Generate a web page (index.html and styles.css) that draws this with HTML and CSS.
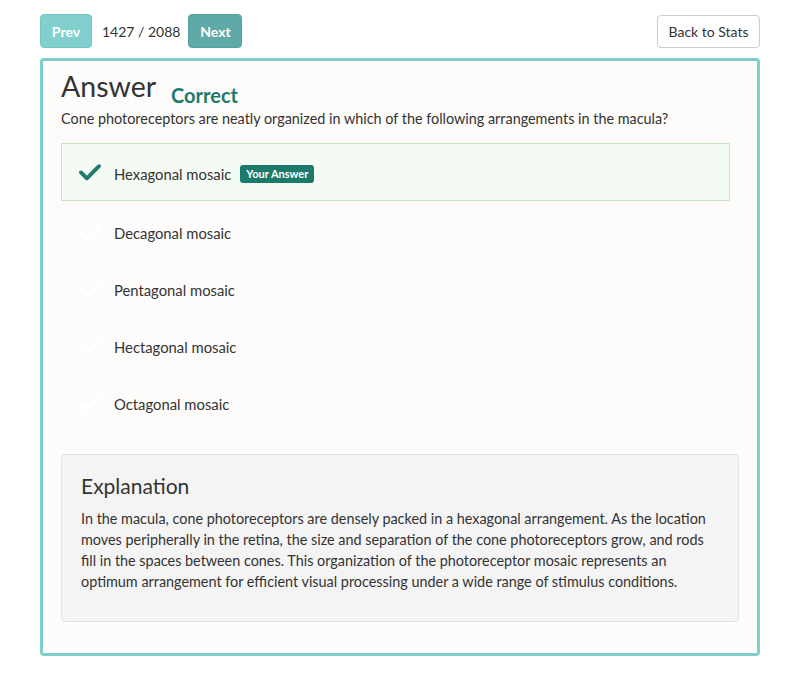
FILE: index.html
```html
<!DOCTYPE html>
<html>
<head>
<meta charset="utf-8">
<link rel="stylesheet" href="styles.css">
</head>
<body>
<div class="page">
  <div class="topbar">
    <div class="nav">
      <button class="btn btn-prev">Prev</button>
      <span class="counter">1427 / 2088</span>
      <button class="btn btn-next">Next</button>
    </div>
    <button class="btn-back">Back to Stats</button>
  </div>
  <div class="panel">
    <div class="title-row">
      <h1 class="title">Answer</h1>
      <span class="status">Correct</span>
    </div>
    <p class="question">Cone photoreceptors are neatly organized in which of the following arrangements in the macula?</p>
    <div class="options">
      <div class="option selected">
        <svg class="check" viewBox="0 0 24 20"><path d="M2 10.5 L8.5 17 L22 3.5" fill="none" stroke="currentColor" stroke-width="4.2" stroke-linecap="round" stroke-linejoin="round"/></svg>
        <span class="opt-text">Hexagonal mosaic</span>
        <span class="badge">Your Answer</span>
      </div>
      <div class="option">
        <svg class="check faint" viewBox="0 0 24 20"><path d="M2 10.5 L8.5 17 L22 3.5" fill="none" stroke="currentColor" stroke-width="4.2" stroke-linecap="round" stroke-linejoin="round"/></svg>
        <span class="opt-text">Decagonal mosaic</span>
      </div>
      <div class="option">
        <svg class="check faint" viewBox="0 0 24 20"><path d="M2 10.5 L8.5 17 L22 3.5" fill="none" stroke="currentColor" stroke-width="4.2" stroke-linecap="round" stroke-linejoin="round"/></svg>
        <span class="opt-text">Pentagonal mosaic</span>
      </div>
      <div class="option">
        <svg class="check faint" viewBox="0 0 24 20"><path d="M2 10.5 L8.5 17 L22 3.5" fill="none" stroke="currentColor" stroke-width="4.2" stroke-linecap="round" stroke-linejoin="round"/></svg>
        <span class="opt-text">Hectagonal mosaic</span>
      </div>
      <div class="option">
        <svg class="check faint" viewBox="0 0 24 20"><path d="M2 10.5 L8.5 17 L22 3.5" fill="none" stroke="currentColor" stroke-width="4.2" stroke-linecap="round" stroke-linejoin="round"/></svg>
        <span class="opt-text">Octagonal mosaic</span>
      </div>
    </div>
    <div class="explanation">
      <h2 class="exp-title">Explanation</h2>
      <p class="exp-text">In the macula, cone photoreceptors are densely packed in a hexagonal arrangement. As the location moves peripherally in the retina, the size and separation of the cone photoreceptors grow, and rods fill in the spaces between cones. This organization of the photoreceptor mosaic represents an optimum arrangement for efficient visual processing under a wide range of stimulus conditions.</p>
    </div>
  </div>
</div>
</body>
</html>
```
FILE: styles.css
```css
* { box-sizing: border-box; }
html, body { margin: 0; padding: 0; background: #ffffff; }
body {
  font-family: "Lato", "Open Sans", sans-serif;
  color: #333333;
  font-size: 14.4px;
}
.page {
  width: 720px;
  margin: 0 auto;
  padding-top: 14px;
}
.topbar {
  display: flex;
  justify-content: space-between;
  align-items: flex-start;
  height: 44px;
}
.nav {
  display: flex;
  align-items: center;
}
.btn {
  font-family: inherit;
  border: 1px solid transparent;
  border-radius: 4px;
  color: #ffffff;
  font-weight: 700;
  font-size: 14px;
  height: 34px;
  padding: 0;
}
.btn-prev {
  background: #81d0cd;
  border-color: #76c6c3;
  width: 52px;
}
.btn-next {
  background: #5faaa7;
  border-color: #58a19e;
  width: 54px;
}
.counter {
  margin: 0 8px 0 10px;
  font-size: 14px;
  color: #333;
}
.btn-back {
  font-family: inherit;
  font-size: 14px;
  background: #ffffff;
  border: 1px solid #cccccc;
  border-radius: 4px;
  color: #333;
  height: 33px;
  width: 103px;
  margin-top: 1px;
  padding: 0;
}
.panel {
  border: 3px solid #7ecfcb;
  border-radius: 4px;
  background: #fdfcfa;
  padding: 5px 18px 31px 18px;
}
.title-row {
  display: flex;
  align-items: baseline;
}
.title {
  margin: 0;
  font-size: 28.5px;
  font-weight: 400;
  line-height: 40px;
  color: #333;
}
.status {
  margin-left: 15px;
  font-size: 20px;
  font-weight: 700;
  color: #1e7a6b;
  position: relative;
  top: 6px;
}
.question {
  margin: 2px 0 14px 0;
  line-height: 21px;
}
.options {
  width: 669px;
  margin-bottom: 25px;
}
.option {
  display: flex;
  align-items: center;
  height: 57px;
  padding-left: 17px;
  padding-top: 6px;
  border: 1px solid transparent;
}
.option.selected {
  height: 58px;
  padding-top: 4px;
  background: #f4faf4;
  border-color: #c7e4c7;
}
.check {
  width: 22px;
  height: 18px;
  color: #1e7a6b;
  margin-right: 13px;
  flex-shrink: 0;
}
.option.selected .check { margin-top: -5px; }
.check.faint { color: #ffffff; }
.opt-text { font-size: 14.8px; }
.badge {
  margin-left: 9px;
  background: #1c7a6b;
  color: #fff;
  font-size: 11px;
  font-weight: 700;
  padding: 2px 6px;
  border-radius: 3px;
  line-height: 14px;
}
.explanation {
  background: #f4f4f4;
  border: 1px solid #e2e2e2;
  border-radius: 4px;
  padding: 17px 19px 29px 19px;
}
.exp-title {
  margin: 0 0 8px 0;
  font-size: 21px;
  font-weight: 400;
  line-height: 28px;
}
.exp-text {
  margin: 0;
  line-height: 21px;
  font-size: 14.4px;
}
```
